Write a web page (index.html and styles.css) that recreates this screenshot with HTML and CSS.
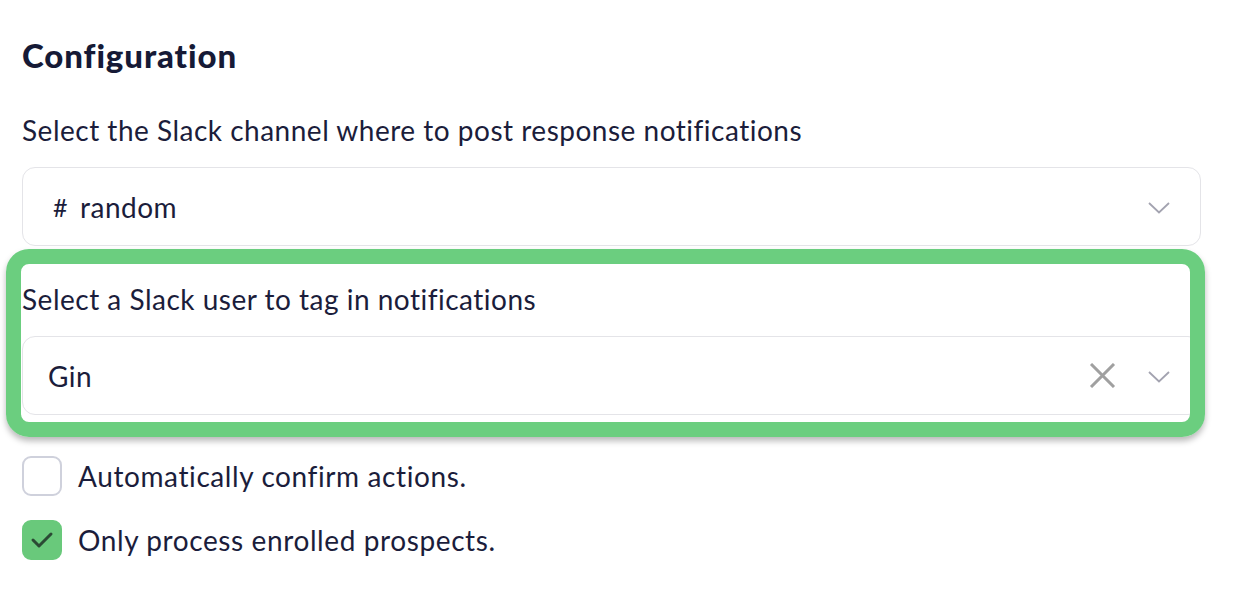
FILE: index.html
```html
<!DOCTYPE html>
<html>
<head>
<meta charset="utf-8">
<link rel="stylesheet" href="styles.css">
</head>
<body>
<div class="page">
  <h2 class="title">Configuration</h2>

  <div class="field">
    <label class="label">Select the Slack channel where to post response notifications</label>
    <div class="select">
      <span class="value"><span class="hash">#</span>random</span>
      <span class="indicators">
        <svg class="chevron" width="22" height="12" viewBox="0 0 22 12"><path d="M1 1 L11 10.5 L21 1" fill="none" stroke="#a3a3b0" stroke-width="1.8"/></svg>
      </span>
    </div>
  </div>

  <div class="field highlighted">
    <div class="highlight"></div>
    <label class="label">Select a Slack user to tag in notifications</label>
    <div class="select">
      <span class="value gin">Gin</span>
      <span class="indicators">
        <svg class="clear" width="27" height="25" viewBox="0 0 27 25"><path d="M2 1 L25 24 M25 1 L2 24" fill="none" stroke="#a0a0a0" stroke-width="3"/></svg>
        <svg class="chevron" width="22" height="12" viewBox="0 0 22 12"><path d="M1 1 L11 10.5 L21 1" fill="none" stroke="#a3a3b0" stroke-width="1.8"/></svg>
      </span>
    </div>
  </div>

  <div class="checks">
    <div class="check-row">
      <span class="box"></span>
      <span class="check-label">Automatically confirm actions.</span>
    </div>
    <div class="check-row">
      <span class="box checked">
        <svg width="24" height="20" viewBox="0 0 24 20"><path d="M3 10 L9 16 L21 4" fill="none" stroke="#2b4a34" stroke-width="3" stroke-linecap="round" stroke-linejoin="round"/></svg>
      </span>
      <span class="check-label">Only process enrolled prospects.</span>
    </div>
  </div>
</div>
</body>
</html>
```

FILE: styles.css
```css
* { box-sizing: border-box; }

html, body {
  margin: 0;
  padding: 0;
  background: #ffffff;
}

body {
  font-family: Lato, "Noto Sans", "Liberation Sans", sans-serif;
  color: #1b1d3b;
}

.page {
  width: 1201px;
  padding: 34px 0 0 22px;
}

.title {
  margin: 0 0 36px 0;
  font-size: 33px;
  line-height: 42px;
  font-weight: 900;
  letter-spacing: 0.9px;
  color: #161a36;
}

.field {
  position: relative;
  display: flex;
  flex-direction: column;
}

.field + .field {
  margin-top: 35px;
}

.label {
  display: block;
  font-size: 28px;
  letter-spacing: 0.5px;
  line-height: 36px;
  margin-bottom: 19px;
}

.select {
  position: relative;
  height: 79px;
  border: 1.5px solid #e4e4e8;
  border-radius: 13px;
  background: #fff;
  display: flex;
  align-items: center;
  justify-content: space-between;
  padding: 0 30px 0 25px;
  z-index: 1;
}

.value {
  font-size: 28px;
  letter-spacing: 0.5px;
  line-height: 36px;
  display: flex;
  align-items: center;
}

.hash {
  margin-left: 5px;
  margin-right: 12px;
  font-size: 25px;
}

.indicators {
  display: flex;
  align-items: center;
  gap: 32px;
}

.chevron {
  display: block;
  margin-top: 2px;
}

.clear {
  display: block;
}

.highlight {
  position: absolute;
  top: -32px;
  left: -16px;
  right: -4px;
  bottom: -22px;
  border: 15px solid #6bce7f;
  border-radius: 23px;
  box-shadow: 0 4px 6px rgba(0, 0, 0, 0.28);
  z-index: 2;
  pointer-events: none;
}

.checks {
  margin-top: 41px;
  display: flex;
  flex-direction: column;
  gap: 24px;
}

.check-row {
  display: flex;
  align-items: center;
  gap: 16px;
  height: 40px;
}

.box {
  width: 40px;
  height: 40px;
  border: 2.5px solid #cfd1dc;
  border-radius: 9px;
  background: #fff;
  display: flex;
  align-items: center;
  justify-content: center;
  flex: none;
}

.box.checked {
  background: #69c97b;
  border-color: #69c97b;
}

.check-label {
  font-size: 28px;
  letter-spacing: 0.6px;
  line-height: 36px;
}
```
